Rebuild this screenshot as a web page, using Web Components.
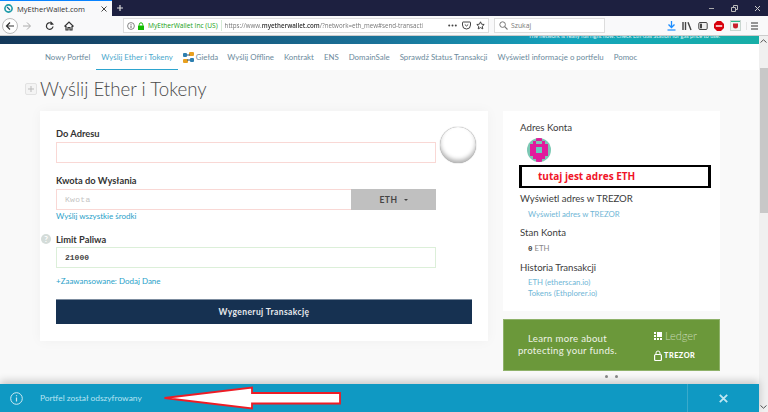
<!DOCTYPE html>
<html lang="pl">
<head>
<meta charset="utf-8">
<title>MyEtherWallet.com</title>
<style>
  html, body { margin: 0; height: 412px; overflow: hidden; background: #f9f9f9; }
  body { font-family: Lato, "Liberation Sans", sans-serif; display: flex; flex-direction: column; position: relative; }
  .page { flex: 1; display: flex; min-height: 0; }
  .main { flex: 1; min-width: 0; display: flex; flex-direction: column; }
  .columns { display: flex; gap: 15px; padding: 0 0 0 40px; align-items: flex-start; }
  .side { display: flex; flex-direction: column; gap: 8px; }
</style>
</head>
<body>
<browser-chrome></browser-chrome>
<div class="page">
  <div class="main">
    <site-nav></site-nav>
    <page-title>Wyślij Ether i Tokeny</page-title>
    <div class="columns">
      <send-card></send-card>
      <div class="side">
        <account-card></account-card>
        <promo-banner></promo-banner>
      </div>
    </div>
  </div>
  <page-scrollbar></page-scrollbar>
</div>
<alert-bar>Portfel został odszyfrowany</alert-bar>

<script>
class BrowserChrome extends HTMLElement {
  constructor() {
    super();
    this.shadowDOM = this.attachShadow({ mode: "open" });
  }
  connectedCallback() {
    this.shadowDOM.innerHTML = `
    <style>
    :host { display: block; font-family: "Open Sans", "Liberation Sans", sans-serif; }
    svg { display: block; flex: none; }
    .tabs { height: 16px; background: #1d2040; display: flex; align-items: stretch; color: #fff; }
    .tab { width: 112px; background: #f9f9fa; border-top: 1px solid #0a84ff; box-sizing: border-box; display: flex; align-items: center; padding: 0 5px 0 4px; gap: 4px; color: #333; font-size: 7.5px; }
    .tab span { flex: 1; }
    .plus { width: 16px; display: flex; align-items: center; justify-content: center; }
    .win { margin-left: auto; display: flex; align-items: center; gap: 16px; padding: 0 7px 0 0; }
    .bar { height: 20px; background: #f9f9fa; display: flex; align-items: center; box-sizing: border-box; border-bottom: 1px solid #ccc; padding: 0 0 0 2px; }
    .back { width: 16px; height: 16px; border: 1px solid #bbb; border-radius: 50%; box-sizing: border-box; display: flex; align-items: center; justify-content: center; background: #fff; }
    .nav { display: flex; align-items: center; gap: 7px; margin-left: 4px; }
    .url { margin-left: 49px; width: 366px; height: 15px; background: #fff; border: 1px solid #ddd; box-sizing: border-box; display: flex; align-items: center; padding: 0 3px; gap: 2px; white-space: nowrap; overflow: hidden; }
    .url .org { color: #12a012; font-size: 6.6px; margin-left: 1px; }
    .url .sep { width: 1px; height: 11px; background: #d5ead5; margin: 0 1px; flex: none; }
    .url .addr { color: #777; flex: 1; font-size: 6.2px; overflow: hidden; -webkit-mask-image: linear-gradient(to left, transparent 0, #000 12px); }
    .url .addr b { color: #333; font-weight: 600; }
    .search { margin-left: 5px; width: 111px; height: 15px; background: #fff; border: 1px solid #ddd; box-sizing: border-box; display: flex; align-items: center; gap: 3px; padding: 0 4px; font-size: 6.8px; color: #777; }
    .tools { display: flex; align-items: center; gap: 6px; margin-left: 62px; }
    .menu { margin-left: -1px; padding-left: 3px; border-left: 1px solid #e3e3e3; }
    </style>
    <div class="tabs">
      <div class="tab">
        <svg width="9" height="9" viewBox="0 0 9 9"><circle cx="4.5" cy="4.5" r="3.6" fill="none" stroke="#1a9aa8" stroke-width="1.6"/><path d="M3 3l3 3" stroke="#1a6a88" stroke-width="1.2"/></svg>
        <span>MyEtherWallet.com</span>
        <svg width="6" height="6" viewBox="0 0 6 6"><path d="M.5.5l5 5M5.5.5l-5 5" stroke="#444" stroke-width="1"/></svg>
      </div>
      <div class="plus"><svg width="8" height="8" viewBox="0 0 8 8"><path d="M4 1v6M1 4h6" stroke="#ddd" stroke-width="1.2"/></svg></div>
      <div class="win">
        <svg width="7" height="7" viewBox="0 0 7 7"><path d="M1 3.5h5" stroke="#aaa"/></svg>
        <svg width="7" height="7" viewBox="0 0 7 7"><path d="M.5 2.5h4v4h-4zM2.5 2.5v-2h4v4h-2" fill="none" stroke="#bbb"/></svg>
        <svg width="7" height="7" viewBox="0 0 7 7"><path d="M1 1l5 5M6 1l-5 5" stroke="#ccc"/></svg>
      </div>
    </div>
    <div class="bar">
      <div class="back"><svg width="10" height="10" viewBox="0 0 10 10"><path d="M9 5H2M5 1.5L1.5 5 5 8.5" fill="none" stroke="#333" stroke-width="1.2"/></svg></div>
      <div class="nav">
        <svg width="10" height="10" viewBox="0 0 10 10"><path d="M1 5h7M5 1.5L8.5 5 5 8.5" fill="none" stroke="#aaa" stroke-width="1"/></svg>
        <svg width="10" height="10" viewBox="0 0 10 10" style="margin-left:6px"><path d="M8 5.5A3.300 3.300 0 1 1 6.500 2.300" fill="none" stroke="#333" stroke-width="1.2"/><path d="M5.500 0v4l3.500-.5z" fill="#333"/></svg>
        <svg width="10" height="10" viewBox="0 0 10 10" style="margin-left:2px"><path d="M.5 5.500L5 1l4.500 4.500M2 5v4h2V6.500h2V9h2V5" fill="none" stroke="#333" stroke-width="1.2"/></svg>
      </div>
      <div class="url">
        <svg width="8" height="8" viewBox="0 0 8 8"><circle cx="4" cy="4" r="3.4" fill="none" stroke="#666" stroke-width=".8"/><path d="M4 3.5V6M4 2v.8" stroke="#666"/></svg>
        <svg width="8" height="8" viewBox="0 0 8 8"><rect x="1" y="3.5" width="6" height="4.5" fill="#12bc00"/><path d="M2.300 3.500V2.500a1.700 1.700 0 0 1 3.400 0v1" fill="none" stroke="#12bc00" stroke-width="1"/></svg>
        <span class="org">MyEtherWallet Inc (US)</span>
        <span class="sep"></span>
        <span class="addr">https://www.<b>myetherwallet.com</b>/?network=eth_mew#send-transacti</span>
        <svg width="9" height="3" viewBox="0 0 9 3" style="margin-left:14px"><circle cx="1.2" cy="1.5" r="1" fill="#444"/><circle cx="4.5" cy="1.5" r="1" fill="#444"/><circle cx="7.8" cy="1.5" r="1" fill="#444"/></svg>
        <svg width="9" height="9" viewBox="0 0 9 9" style="margin-left:3px"><path d="M1 1h7a.5.5 0 0 1 .5.5V4a4 4 0 0 1-8 0V1.500A.5.5 0 0 1 1 1z" fill="none" stroke="#444"/><path d="M2.800 3.500L4.500 5l1.700-1.500" fill="none" stroke="#444"/></svg>
        <svg width="9" height="9" viewBox="0 0 9 9" style="margin-left:3px"><path d="M4.500.8l1.100 2.400 2.600.3-1.900 1.800.5 2.600-2.300-1.300-2.300 1.300.5-2.600L.8 3.500l2.600-.3z" fill="none" stroke="#333" stroke-width=".9"/></svg>
      </div>
      <div class="search">
        <svg width="9" height="9" viewBox="0 0 9 9"><circle cx="3.6" cy="3.6" r="2.8" fill="none" stroke="#777"/><path d="M5.700 5.700L8.500 8.500" stroke="#777" stroke-width="1.1"/></svg>
        <span>Szukaj</span>
      </div>
      <div class="tools">
        <svg width="9" height="10" viewBox="0 0 9 10"><path d="M4.500 0v6M1.500 3.500l3 3 3-3" fill="none" stroke="#1a8cff" stroke-width="1.3"/><path d="M.5 9h8" stroke="#1a8cff" stroke-width="1.2"/></svg>
        <svg width="10" height="10" viewBox="0 0 10 10"><path d="M1 1v8M3.500 1v8M6 1.200L9 9" stroke="#444" stroke-width="1.4"/></svg>
        <svg width="10" height="10" viewBox="0 0 10 10"><rect x=".8" y="1.5" width="8.4" height="7" rx="1.2" fill="#eee" stroke="#444"/><rect x="2" y="2.7" width="2" height="4.6" fill="#444"/></svg>
        <svg width="10" height="10" viewBox="0 0 10 10"><path d="M3 0h4l3 3v4l-3 3H3L0 7V3z" fill="#d8000c"/><path d="M1.800 4h6.400v2H1.800z" fill="#f6b9bc"/></svg>
        <svg width="11" height="11" viewBox="0 0 11 11"><rect x=".5" y=".5" width="10" height="10" fill="#eef7f3" stroke="#c9d6d0"/><path d="M1 1.500h9" stroke="#2fb98c"/><path d="M3 3.500h5v2.500a2.500 2.500 0 0 1-5 0z" fill="#c8202c"/></svg>
        <svg class="menu" width="9" height="8" viewBox="0 0 9 8" style="box-sizing:content-box"><path d="M1 1h7M1 4h7M1 7h7" stroke="#333" stroke-width="1.2"/></svg>
      </div>
    </div>`;
  }
}

class SiteNav extends HTMLElement {
  constructor() {
    super();
    this.shadowDOM = this.attachShadow({ mode: "open" });
  }
  connectedCallback() {
    this.shadowDOM.innerHTML = `
    <style>
    :host { display: block; background: #fff; }
    .strip { height: 8px; overflow: hidden; background: linear-gradient(90deg, #14385a 0, #1a7299 50%, #14a4bc 75%, #17aea6 100%); text-align: right; padding-right: 39px; }
    .strip span { display: block; margin-top: -4px; font-size: 5.6px; line-height: 7px; color: #e4f6f8; }
    nav { height: 26px; display: flex; align-items: center; gap: 10px; padding-left: 45px; font-size: 7.85px; color: #6b8a9c; white-space: nowrap; }
    a { display: flex; align-items: center; gap: 2px; height: 26px; box-sizing: border-box; }
    a:first-child { margin-right: 1px; }
    a.on { color: #4aa8cc; border-bottom: 1px solid #2da5cf; margin: 0 -5px; padding: 0 5px; }
    a.swap { margin-right: -1px; }
    </style>
    <div class="strip"><span>The network is really full right now. Check Eth Gas Station for gas price to use.</span></div>
    <nav>
      <a>Nowy Portfel</a>
      <a class="on">Wyślij Ether i Tokeny</a>
      <a class="swap"><svg width="11" height="11" viewBox="0 0 11 11"><rect x="6" y="0" width="5" height="4" rx="1" fill="#e8a020"/><rect x="0" y="7" width="5" height="4" rx="1" fill="#e8a020"/><rect x="0" y="1" width="4" height="4" rx="1" fill="#2d7fb0"/><rect x="7" y="6" width="4" height="4" rx="1" fill="#2d7fb0"/><path d="M4 3h3M7 8H4" stroke="#1f4f78"/></svg>Giełda</a>
      <a>Wyślij Offline</a>
      <a>Kontrakt</a>
      <a>ENS</a>
      <a>DomainSale</a>
      <a>Sprawdź Status Transakcji</a>
      <a>Wyświetl informacje o portfelu</a>
      <a>Pomoc</a>
    </nav>`;
  }
}

class PageTitle extends HTMLElement {
  constructor() {
    super();
    this.shadowDOM = this.attachShadow({ mode: "open" });
  }
  connectedCallback() {
    this.shadowDOM.innerHTML = `
    <style>
    :host { display: flex; align-items: center; height: 41px; box-sizing: border-box; padding: 0 0 3px 25px; gap: 3px; }
    .toggle { width: 12px; height: 12px; border: 1px solid #e2e2e2; border-radius: 2px; box-sizing: border-box; display: flex; align-items: center; justify-content: center; background: #f4f4f4; }
    h1 { margin: 0; font: 300 18.7px/1 Lato, "Liberation Sans", sans-serif; color: #4a4a4a; }
    </style>
    <div class="toggle"><svg width="8" height="8" viewBox="0 0 8 8"><path d="M4 1v6M1 4h6" stroke="#bbb"/></svg></div>
    <h1><slot></slot></h1>`;
  }
}

class SendCard extends HTMLElement {
  constructor() {
    super();
    this.shadowDOM = this.attachShadow({ mode: "open" });
  }
  connectedCallback() {
    this.shadowDOM.innerHTML = `
    <style>
    :host { display: block; width: 448px; height: 230px; box-sizing: border-box; background: #fff; padding: 17px 16px 0; box-shadow: 0 0 12px rgba(0,0,0,.04); position: relative; }
    label { display: block; font-size: 9.3px; font-weight: 700; line-height: 12px; color: #333; }
    .box { display: block; width: 380px; height: 21px; box-sizing: border-box; background: #fff; border: 1px solid #f9d8d5; margin-top: 2px; }
    .row { display: flex; width: 380px; height: 21px; margin-top: 2px; }
    .row .box { flex: 1; margin: 0; border-right: 0; font: 8px/19px "Liberation Mono", monospace; color: #c4c4c4; padding-left: 8px; letter-spacing: .3px; }
    .unit { width: 85px; background: #c0c0c0; display: flex; align-items: center; justify-content: center; gap: 6px; font-size: 8.5px; font-weight: 700; letter-spacing: .5px; color: #444; }
    .unit i { border: 2px solid transparent; border-top: 2px solid #444; margin-top: 2px; }
    .blob { position: absolute; left: 400px; top: 16px; width: 36px; height: 36px; border-radius: 50%; background: #fff; box-shadow: inset 0 -3px 4px rgba(0,0,0,.3), 0 0 1px rgba(0,0,0,.6); }
    a { display: block; font-size: 8px; line-height: 11px; color: #2a9fc9; }
    .gap1 { margin-top: 12px; }
    .gas { margin-top: 12px; position: relative; }
    .help { position: absolute; left: -15px; top: 0; width: 10px; height: 10px; border-radius: 50%; background: #d4dcd9; color: #fff; font-size: 8px; font-weight: 700; line-height: 10px; text-align: center; }
    .ok { border-color: #dcefd9; font: 700 8px/19px "Liberation Mono", monospace; color: #444; padding-left: 8px; margin-top: 1px; }
    button { display: block; width: 416px; height: 25px; margin-top: 12px; border: 0; border-top: 1px solid #7c8c9f; background: #163151; color: #e8eaee; font: 700 8.5px Lato, "Liberation Sans", sans-serif; letter-spacing: .4px; padding: 0; }
    </style>
    <label>Do Adresu</label>
    <div class="box"></div>
    <div class="blob"></div>
    <label class="gap1">Kwota do Wysłania</label>
    <div class="row"><div class="box">Kwota</div><div class="unit">ETH <i></i></div></div>
    <a style="margin-top:1px">Wyślij wszystkie środki</a>
    <label class="gas"><span class="help">?</span>Limit Paliwa</label>
    <div class="box ok">21000</div>
    <a style="margin-top:8px">+Zaawansowane: Dodaj Dane</a>
    <button>Wygeneruj Transakcję</button>`;
  }
}

class AccountCard extends HTMLElement {
  constructor() {
    super();
    this.shadowDOM = this.attachShadow({ mode: "open" });
  }
  connectedCallback() {
    this.shadowDOM.innerHTML = `
    <style>
    :host { display: block; width: 217px; height: 200px; box-sizing: border-box; background: #fff; padding: 10px 9px 0 17px; }
    h3 { margin: 0; font-size: 9.7px; font-weight: 400; line-height: 12px; color: #3c3c3c; }
    h3.big { font-size: 9.6px; }
    .icon { display: block; margin: 5px 0 3px 7px; border-radius: 50%; }
    .note { height: 23px; box-sizing: border-box; border: 2px solid #000; border-width: 2px 3px; margin-left: -1px; padding-left: 16px; font: 700 10px/19px "Open Sans", "Liberation Sans", sans-serif; color: #f01428; }
    a, .val { display: block; font-size: 7.8px; line-height: 11px; color: #6fb6d6; margin-left: 8px; }
    .val { color: #888; }
    .val b { font: 700 7.5px "Liberation Mono", monospace; color: #444; }
    </style>
    <h3>Adres Konta</h3>
    <svg class="icon" width="24" height="24" viewBox="0 0 8 8" shape-rendering="crispEdges">
      <rect width="8" height="8" fill="#7cc8b4"/>
      <path d="M3 0h2v1H3zM2 1h1v1H2zM5 1h1v1H5zM1 2h6v1H1zM1 3h2v2H1zM5 3h2v2H5zM1 5h6v1H1zM2 6h4v1H2zM3 7h2v1H3z" fill="#e01c9c"/>
      <rect x="3" y="3" width="2" height="2" fill="#66ccc0"/>
    </svg>
    <div class="note">tutaj jest adres ETH</div>
    <h3 class="big" style="margin-top:5px">Wyświetl adres w TREZOR</h3>
    <a style="margin-top:4px">Wyświetl adres w TREZOR</a>
    <h3 class="big" style="margin-top:7px">Stan Konta</h3>
    <div class="val" style="margin-top:4px"><b>0</b> ETH</div>
    <h3 class="big" style="margin-top:8px">Historia Transakcji</h3>
    <a style="margin-top:3px">ETH (etherscan.io)</a>
    <a>Tokens (Ethplorer.io)</a>`;
  }
}

class PromoBanner extends HTMLElement {
  constructor() {
    super();
    this.shadowDOM = this.attachShadow({ mode: "open" });
  }
  connectedCallback() {
    this.shadowDOM.innerHTML = `
    <style>
    :host { display: block; width: 217px; }
    .ad { height: 52px; box-sizing: border-box; background: #6b983a; border: 1px solid #8fb26a; display: flex; align-items: center; color: #eef3e6; }
    .txt { width: 127px; text-align: center; font-size: 9.6px; line-height: 12px; letter-spacing: .3px; }
    .logos { margin-left: 23px; display: flex; flex-direction: column; gap: 8px; }
    .logo { display: flex; align-items: center; gap: 3px; }
    .ledger { font-weight: 300; font-size: 11px; color: #c9d9b6; }
    .trezor { font-weight: 900; font-size: 7.3px; letter-spacing: .5px; color: #fff; gap: 2px; }
    .dots { display: flex; justify-content: center; gap: 7px; margin-top: 4px; }
    .dots i { width: 3px; height: 3px; border-radius: 50%; background: #8a8a8a; }
    </style>
    <div class="ad">
      <div class="txt">Learn more about<br>protecting your funds.</div>
      <div class="logos">
        <div class="logo ledger"><svg width="8" height="8" viewBox="0 0 8 8"><path d="M3 0h5v5H3zM0 0h2v2H0zM0 3h2v2H0zM0 6h2v2H0zM3 6h2v2H3zM6 6h2v2H6z" fill="#fff"/></svg>Ledger</div>
        <div class="logo trezor"><svg width="8" height="11" viewBox="0 0 8 11"><path d="M2 4.500V3a2 2 0 0 1 4 0v1.500" fill="none" stroke="#fff"/><rect x=".6" y="4.5" width="6.8" height="6" rx="1" fill="none" stroke="#fff" stroke-width="1.2"/></svg>TREZOR</div>
      </div>
    </div>
    <div class="dots"><i></i><i></i></div>`;
  }
}

class PageScrollbar extends HTMLElement {
  constructor() {
    super();
    this.shadowDOM = this.attachShadow({ mode: "open" });
  }
  connectedCallback() {
    this.shadowDOM.innerHTML = `
    <style>
    :host { display: flex; flex-direction: column; width: 9px; background: #f0f0f0; align-items: flex-end; padding-top: 3px; box-sizing: border-box; }
    .thumb { width: 8px; height: 145px; background: #c8c8c8; margin-top: 25px; }
    svg { flex: none; margin-right: 1px; }
    </style>
    <svg width="7" height="4" viewBox="0 0 7 4"><path d="M.5 3.500L3.500.8l3 2.700" fill="none" stroke="#555"/></svg>
    <div class="thumb"></div>
    <svg width="7" height="4" viewBox="0 0 7 4" style="margin-top:auto;margin-bottom:3px"><path d="M.5.500l3 2.700 3-2.700" fill="none" stroke="#555"/></svg>`;
  }
}

class AlertBar extends HTMLElement {
  constructor() {
    super();
    this.shadowDOM = this.attachShadow({ mode: "open" });
  }
  connectedCallback() {
    this.shadowDOM.innerHTML = `
    <style>
    :host { position: absolute; left: 0; bottom: 0; width: 759px; height: 28px; background: #0f99c3; display: flex; align-items: center; color: #b7e4f2; font-size: 8.4px; box-shadow: 0 -3px 8px rgba(0,0,0,.2); }
    .info { margin: 0 0 0 10px; }
    .msg { margin-left: 17px; }
    .close { margin-left: auto; width: 72px; height: 100%; border-left: 1px solid #3aaacb; display: flex; align-items: center; justify-content: center; box-sizing: border-box; }
    .arrow { position: absolute; left: 163px; top: 2px; }
    </style>
    <svg class="info" width="13" height="13" viewBox="0 0 13 13"><circle cx="6.5" cy="6.5" r="5.8" fill="none" stroke="#cfeaf3" stroke-width="1"/><path d="M6.500 5.500v4M6.500 3.200v1" stroke="#cfeaf3" stroke-width="1.2"/></svg>
    <span class="msg"><slot></slot></span>
    <div class="close"><svg width="9" height="9" viewBox="0 0 9 9"><path d="M.8.8l7.400 7.400M8.200.8L.8 8.200" stroke="#bfe6f2" stroke-width="1.8"/></svg></div>
    <svg class="arrow" width="180" height="24" viewBox="0 0 180 24"><path d="M1.500 12L89 1.500v5.500h88v10.500H89v5z" fill="#fff" stroke="#ee1c25" stroke-width="1.8"/></svg>`;
  }
}

customElements.define("browser-chrome", BrowserChrome);
customElements.define("site-nav", SiteNav);
customElements.define("page-title", PageTitle);
customElements.define("send-card", SendCard);
customElements.define("account-card", AccountCard);
customElements.define("promo-banner", PromoBanner);
customElements.define("page-scrollbar", PageScrollbar);
customElements.define("alert-bar", AlertBar);
</script>
</body>
</html>
